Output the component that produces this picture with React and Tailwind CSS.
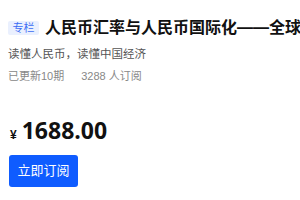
import React from 'react';

export default function App() {
  return (
    <div className="w-[300px] h-[200px] overflow-hidden bg-white pl-2 pt-[19px] font-['Liberation_Sans','Noto_Sans_CJK_SC',sans-serif]">
      {/* title row */}
      <div className="flex items-center whitespace-nowrap h-[18px]">
        <span className="flex h-[14px] w-[31px] shrink-0 items-center justify-center rounded-[2px] bg-[#eaf0fe] text-[11px] leading-none text-[#3b6cf4]">
          专栏
        </span>
        <h1 className="ml-[6px] shrink-0 text-[16px] font-bold leading-[18px] text-[#111]">
          人民币汇率与人民币国际化——全球
        </h1>
      </div>

      <p className="mt-[10px] text-[11.5px] leading-[14px] text-[#555]">读懂人民币，读懂中国经济</p>

      <div className="mt-[8px] flex text-[11px] leading-[14px] text-[#888]">
        <span>已更新10期</span>
        <span className="ml-[17px]">3288 人订阅</span>
      </div>

      <div className="mt-[33px] flex items-baseline text-[#111]">
        <span className="ml-[2px] text-[12px] font-bold">¥</span>
        <span className="ml-[5px] font-['Open_Sans',sans-serif] text-[23px] font-bold leading-[28px]">1688.00</span>
      </div>

      <button className="mt-[11px] ml-px flex h-[32px] w-[69px] items-center justify-center rounded-[3px] bg-[#0f5cff] text-[13px] text-white">
        立即订阅
      </button>
    </div>
  );
}
